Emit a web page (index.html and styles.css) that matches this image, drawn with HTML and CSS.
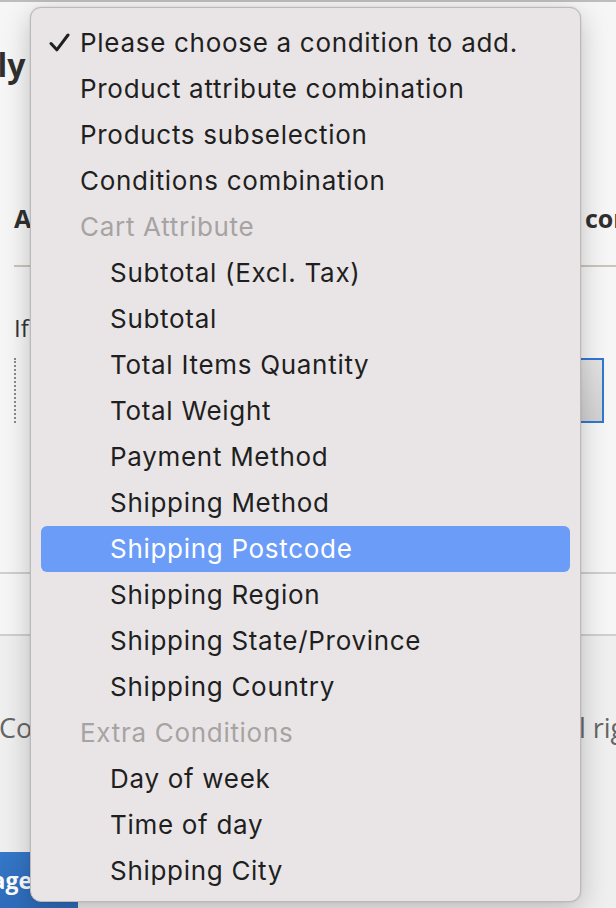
FILE: index.html
```html
<!DOCTYPE html>
<html lang="en">
<head>
<meta charset="utf-8">
<title>Condition picker</title>
<link rel="stylesheet" href="styles.css">
</head>
<body>
<div class="page">
  <div class="top-strip"></div>
  <h1 class="page-title">Apply</h1>
  <div class="section-head">
    <span class="section-left">Actions</span>
    <span class="section-right">conditions</span>
  </div>
  <div class="section-rule"></div>
  <p class="cond-lead">If ALL of these conditions are TRUE :</p>
  <div class="cond-row">
    <div class="cond-select"></div>
  </div>
  <div class="divider divider-a"></div>
  <div class="divider divider-b"></div>
  <div class="footer">
    <div class="footer-row">
      <span class="footer-left">Copyright © Magento Commerce Inc.</span>
      <span class="footer-right">All rights reserved.</span>
    </div>
    <div class="footer-bottom">
      <div class="btn-blue"><span>Manage</span></div>
    </div>
  </div>
</div>

<div class="menu" role="listbox">
  <div class="opt checked"><svg class="check" viewBox="0 0 21 19" width="21" height="19" aria-hidden="true"><path d="M2 10.5 L7.8 16.8 L19 2" fill="none" stroke="#1f1f1f" stroke-width="3" stroke-linecap="round" stroke-linejoin="round"/></svg>Please choose a condition to add.</div>
  <div class="opt">Product attribute combination</div>
  <div class="opt">Products subselection</div>
  <div class="opt">Conditions combination</div>
  <div class="opt group">Cart Attribute</div>
  <div class="opt sub">Subtotal (Excl. Tax)</div>
  <div class="opt sub">Subtotal</div>
  <div class="opt sub">Total Items Quantity</div>
  <div class="opt sub">Total Weight</div>
  <div class="opt sub">Payment Method</div>
  <div class="opt sub">Shipping Method</div>
  <div class="opt sub active">Shipping Postcode</div>
  <div class="opt sub">Shipping Region</div>
  <div class="opt sub">Shipping State/Province</div>
  <div class="opt sub">Shipping Country</div>
  <div class="opt group">Extra Conditions</div>
  <div class="opt sub">Day of week</div>
  <div class="opt sub">Time of day</div>
  <div class="opt sub">Shipping City</div>
</div>
</body>
</html>
```

FILE: styles.css
```css
* { box-sizing: border-box; }
html, body {
  margin: 0;
  padding: 0;
  width: 616px;
  height: 908px;
  overflow: hidden;
  background: #f6f6f6;
  font-family: "Open Sans", "Liberation Sans", sans-serif;
  color: #303030;
}
.page {
  position: relative;
  width: 616px;
  height: 908px;
  display: flex;
  flex-direction: column;
}
.top-strip {
  height: 2px;
  background: #bdbdbd;
  flex: none;
}
.page-title {
  margin: 42px 0 0 -65px;
  font-size: 32px;
  line-height: 42px;
  font-weight: 700;
  white-space: nowrap;
  color: #303030;
  flex: none;
}
.section-head {
  margin-top: 116px;
  display: flex;
  align-items: center;
  height: 32px;
  padding-left: 14px;
  font-size: 25px;
  font-weight: 700;
  color: #303030;
  flex: none;
}
.section-right {
  margin-left: auto;
  width: 31px;
  overflow: hidden;
  white-space: nowrap;
}
.section-rule {
  margin: 31px 0 0 14px;
  height: 2px;
  background: #cbc4ba;
  flex: none;
}
.cond-lead {
  margin: 45px 0 0 14px;
  font-size: 24px;
  line-height: 32px;
  white-space: nowrap;
  color: #333;
  flex: none;
}
.cond-row {
  margin: 14px 12px 0 14px;
  height: 65px;
  border-left: 2px dotted #8a8a8a;
  display: flex;
  padding-left: 30px;
  flex: none;
}
.cond-select {
  flex: 1;
  border: 2px solid #3077d3;
  background: linear-gradient(#e3e3e3, #d2d2d2);
}
.divider {
  height: 2px;
  background: #cfcfcf;
  flex: none;
}
.divider-a { margin-top: 149px; }
.divider-b { margin-top: 60px; }
.footer {
  flex: 1;
  background: #efefef;
  display: flex;
  flex-direction: column;
}
.footer-row {
  margin-top: 74px;
  display: flex;
  font-size: 27px;
  line-height: 36px;
  color: #666;
  white-space: nowrap;
}
.footer-left { margin-left: -1px; }
.footer-right {
  margin-left: auto;
  width: 61px;
  overflow: hidden;
}
.footer-bottom {
  margin-top: auto;
  height: 56px;
  display: flex;
}
.btn-blue {
  width: 78px;
  background: linear-gradient(#3577c8, #2e6cbb);
  color: #fff;
  font-weight: 700;
  font-size: 23px;
  display: flex;
  align-items: center;
  justify-content: flex-end;
  overflow: hidden;
  padding-right: 46px;
  white-space: nowrap;
}

/* dropdown menu (overlay) */
.menu {
  position: absolute;
  left: 30px;
  top: 7px;
  width: 551px;
  height: 895px;
  padding: 12px 10px 7px 10px;
  background: #e9e5e6;
  border: 1px solid #bdb9b9;
  border-radius: 11px;
  box-shadow: 0 8px 28px rgba(0, 0, 0, 0.22), 0 0 2px rgba(0, 0, 0, 0.15);
  font-family: Inter, "Noto Sans", "Liberation Sans", sans-serif;
  font-size: 26px;
  letter-spacing: 0.7px;
  color: #1f1f1f;
}
.opt {
  position: relative;
  height: 46px;
  line-height: 46px;
  padding-left: 39px;
  border-radius: 6px;
  white-space: nowrap;
}
.opt.sub { padding-left: 69px; }
.opt.group { color: #a6a3a3; }
.opt.active {
  background: #6a9cf8;
  color: #fff;
}
.check {
  position: absolute;
  left: 8px;
  top: 13px;
}
```
